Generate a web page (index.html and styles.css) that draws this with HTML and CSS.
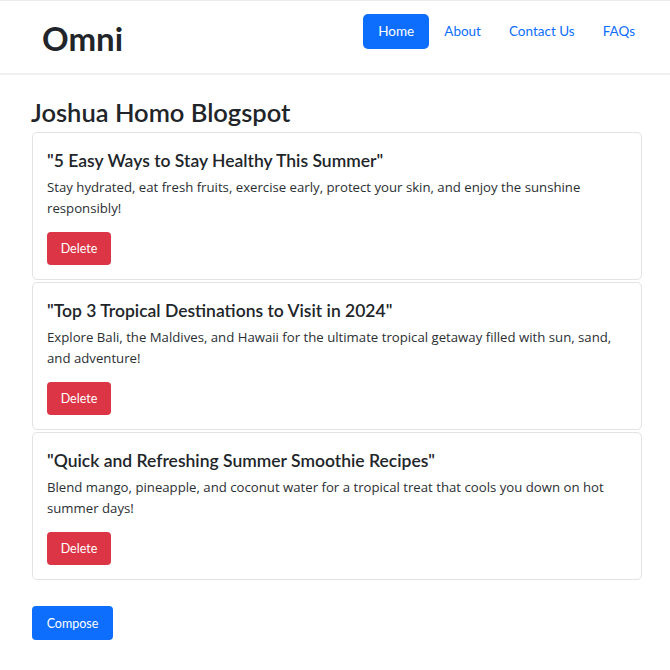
FILE: index.html
```html
<!DOCTYPE html>
<html lang="en">
<head>
<meta charset="utf-8">
<title>Omni</title>
<link rel="stylesheet" href="styles.css">
</head>
<body>
<header class="navbar">
  <div class="brand">Omni</div>
  <nav class="nav">
    <a class="nav-link active" href="#">Home</a>
    <a class="nav-link" href="#">About</a>
    <a class="nav-link" href="#">Contact Us</a>
    <a class="nav-link" href="#">FAQs</a>
  </nav>
</header>
<main class="main">
  <h1 class="page-title">Joshua Homo Blogspot</h1>
  <div class="card">
    <h2 class="card-title">"5 Easy Ways to Stay Healthy This Summer"</h2>
    <p class="card-text">Stay hydrated, eat fresh fruits, exercise early, protect your skin, and enjoy the sunshine responsibly!</p>
    <button class="btn btn-danger">Delete</button>
  </div>
  <div class="card">
    <h2 class="card-title">"Top 3 Tropical Destinations to Visit in 2024"</h2>
    <p class="card-text">Explore Bali, the Maldives, and Hawaii for the ultimate tropical getaway filled with sun, sand, and adventure!</p>
    <button class="btn btn-danger">Delete</button>
  </div>
  <div class="card">
    <h2 class="card-title">"Quick and Refreshing Summer Smoothie Recipes"</h2>
    <p class="card-text">Blend mango, pineapple, and coconut water for a tropical treat that cools you down on hot summer days!</p>
    <button class="btn btn-danger">Delete</button>
  </div>
  <button class="btn btn-primary compose">Compose</button>
</main>
</body>
</html>
```
FILE: styles.css
```css
* { box-sizing: border-box; }
body {
  margin: 0;
  font-family: Lato, "Open Sans", sans-serif;
  color: #212529;
  background: #fff;
}
.navbar {
  display: flex;
  align-items: center;
  justify-content: space-between;
  height: 75px;
  padding: 0 21px 0 42px;
  border-top: 1px solid #ececec;
  border-bottom: 2px solid #f0f0f0;
}
.brand {
  font-size: 33px;
  font-weight: 700;
  color: #212529;
  margin-top: 2px;
}
.nav {
  display: flex;
  align-items: center;
  margin-top: -12px;
}
.nav-link {
  display: block;
  padding: 9px 14px;
  font-size: 13.5px;
  color: #0d6efd;
  text-decoration: none;
  border-radius: 5px;
  line-height: 17px;
}
.nav-link.active {
  background: #0d6efd;
  color: #fff;
  padding: 9px 15px;
  height: 35px;
  margin-right: 1px;
}
.main {
  padding: 0 28px 30px 32px;
}
.page-title {
  font-size: 25.5px;
  font-weight: 600;
  margin: 21px 0 4px -1px;
  line-height: 32px;
}
.card {
  border: 1px solid #e3e3e3;
  border-radius: 5px;
  padding: 14px;
  margin-bottom: 2px;
  height: 148px;
}
.card-title {
  font-size: 17.5px;
  font-weight: 600;
  margin: 2px 0 4px;
  line-height: 24px;
}
.card-text {
  font-family: "Open Sans", sans-serif;
  font-size: 13.2px;
  line-height: 21px;
  margin: 0 0 13px;
  color: #2b2f33;
}
.btn {
  display: inline-block;
  border: none;
  border-radius: 4px;
  font-family: inherit;
  font-size: 12.5px;
  color: #fff;
  padding: 0;
  height: 33px;
}
.btn-danger {
  background: #dc3545;
  width: 64px;
}
.btn-primary {
  background: #0d6efd;
}
.compose {
  width: 81px;
  height: 34px;
  margin-top: 24px;
}
```
